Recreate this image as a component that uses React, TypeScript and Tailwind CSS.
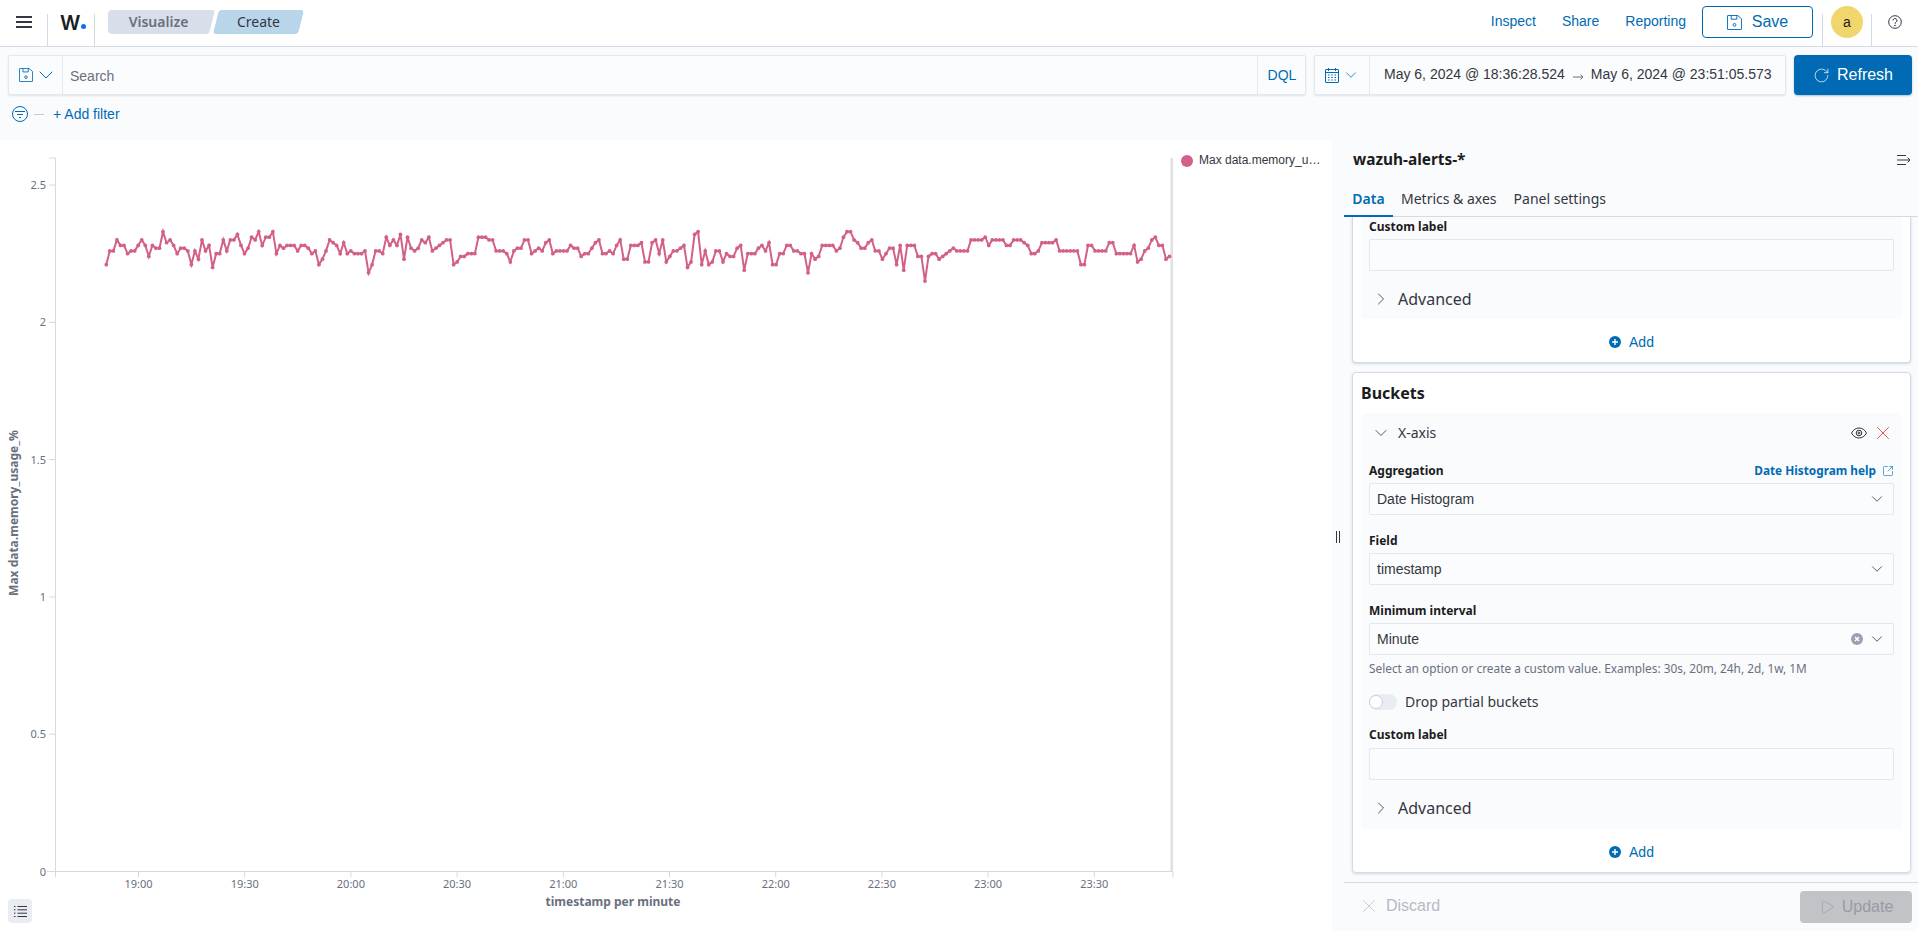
import { ChevronDown, ChevronRight, Play, RotateCw, SquareArrowOutUpRight, X } from "lucide-react";

const points = [
  21, 26, 26, 30, 28, 28, 25, 26, 26, 28, 30, 28, 24, 28, 27, 27, 33, 29, 30, 28, 25, 27, 27, 26, 21, 26, 23, 30, 26, 28,
  20, 25, 25, 30, 26, 30, 30, 32, 28, 25, 27, 31, 30, 33, 28, 31, 31, 33, 25, 28, 27, 28, 28, 28, 26, 28, 28, 27, 25, 26,
  21, 23, 26, 30, 29, 28, 25, 29, 25, 26, 25, 25, 25, 26, 18, 21, 26, 26, 25, 31, 28, 30, 28, 32, 23, 31, 27, 26, 27, 30,
  29, 31, 26, 27, 28, 29, 30, 30, 21, 22, 24, 24, 25, 25, 25, 31, 31, 31, 30, 30, 26, 26, 26, 25, 22, 26, 27, 27, 30, 30,
  25, 26, 27, 26, 29, 30, 25, 26, 26, 26, 26, 28, 27, 27, 24, 25, 25, 27, 29, 30, 25, 25, 26, 25, 28, 30, 23, 23, 28, 28,
  28, 29, 22, 22, 29, 30, 25, 30, 22, 24, 26, 26, 27, 28, 20, 22, 32, 33, 21, 26, 21, 22, 26, 26, 22, 25, 24, 24, 27, 28,
  19, 25, 25, 25, 27, 28, 26, 29, 21, 21, 25, 25, 28, 28, 26, 26, 25, 25, 18, 25, 23, 24, 28, 28, 28, 28, 26, 27, 31, 33,
  33, 30, 29, 27, 27, 29, 30, 26, 26, 23, 25, 27, 27, 21, 28, 19, 28, 28, 28, 24, 24, 15, 24, 25, 25, 23, 24, 25, 26, 27,
  26, 26, 26, 26, 30, 30, 30, 30, 31, 28, 30, 30, 30, 30, 28, 28, 30, 30, 30, 29, 28, 25, 25, 26, 29, 29, 29, 29, 30, 26,
  26, 26, 26, 26, 26, 21, 21, 28, 28, 26, 26, 26, 26, 29, 29, 25, 25, 25, 25, 25, 28, 22, 23, 26, 27, 30, 31, 28, 28, 23,
  24,
];

const yTicks = [
  { label: "2.5", y: 45 },
  { label: "2", y: 182.3 },
  { label: "1.5", y: 319.6 },
  { label: "1", y: 457 },
  { label: "0.5", y: 594.2 },
  { label: "0", y: 731.5 },
];

const xTicks = ["19:00", "19:30", "20:00", "20:30", "21:00", "21:30", "22:00", "22:30", "23:00", "23:30"];

function FloppyIcon({ className }: { className: string }) {
  return (
    <svg className={className} viewBox="0 0 16 16" fill="none" stroke="currentColor" strokeWidth="1">
      <path d="M1 .5h10.500l4 3.500v11a.5.5 0 0 1-.5.5H1a.5.5 0 0 1-.5-.5v-14a.5.5 0 0 1 .5-.5z" />
      <path d="M4.500 .5v4h6v-4" />
      <circle cx="8" cy="10.500" r="1.500" />
    </svg>
  );
}

function PlusCircle() {
  return (
    <svg className="h-3 w-3" viewBox="0 0 12 12">
      <circle cx="6" cy="6" r="6" fill="#006bb4" />
      <path d="M6 3v6M3 6h6" stroke="#fff" strokeWidth="1.400" />
    </svg>
  );
}

function AddRow() {
  return (
    <div className="flex items-center justify-center gap-[8px] text-sm text-[#006bb4] [font-family:'Liberation_Sans',Arial,sans-serif]">
      <PlusCircle />
      <span>Add</span>
    </div>
  );
}

function FieldLabel({ children }: { children: string }) {
  return <div className="flex h-[17px] items-center text-xs font-bold text-[#1a1c21] [font-family:'Noto_Sans',sans-serif]">{children}</div>;
}

function SelectBox({ value, clearable }: { value: string; clearable?: boolean }) {
  return (
    <div className="mt-[3px] flex h-8 items-center rounded-[2px] border border-[#e3e7ef] bg-[#fbfcfd] pl-[7px] pr-[7px] text-sm text-[#343741] [font-family:'Liberation_Sans',Arial,sans-serif]">
      <span className="flex-1">{value}</span>
      {clearable && (
        <svg className="mr-[5px] h-3 w-3" viewBox="0 0 12 12">
          <circle cx="6" cy="6" r="6" fill="#98a2b3" />
          <path d="M4 4l4 4M8 4l-4 4" stroke="#fff" strokeWidth="1.500" />
        </svg>
      )}
      <ChevronDown className="h-[18px] w-[18px] text-[#343741]" strokeWidth={1.1} />
    </div>
  );
}

function AdvancedRow() {
  return (
    <div className="flex items-center gap-[7px] pl-[10px] text-base text-[#343741] [font-family:'Noto_Sans',sans-serif]">
      <ChevronRight className="h-5 w-5" strokeWidth={1} />
      <span>Advanced</span>
    </div>
  );
}

function Chart() {
  const step = (1169.5 - 106.3) / (points.length - 1);
  const coords = points.map((p, i) => ({ x: 106.3 + i * step, y: 731.5 - (2 + p / 100) * 274.6 }));
  const tickClass = "fill-[#69707d] text-[11px] [font-family:'Noto_Sans',sans-serif]";
  const titleClass = "fill-[#69707d] text-xs font-bold [font-family:'Noto_Sans',sans-serif]";

  return (
    <svg className="block shrink-0" width="1175" height="791" viewBox="0 0 1175 791">
      <path d="M55.500 18V731.500M49 18h6.500M55.500 731.500V737M47 731.500H1173M1173 731.500V737" stroke="#d9d9d9" fill="none" />
      <rect x="1170.500" y="18" width="2.500" height="713" fill="#e0e0e0" />
      {yTicks.map((t) => (
        <g key={t.label}>
          <path d={`M49 ${t.y}H55.500`} stroke="#d9d9d9" />
          <text x="46" y={t.y + 4} textAnchor="end" className={tickClass}>
            {t.label}
          </text>
        </g>
      ))}
      {xTicks.map((label, i) => {
        const x = 138.500 + i * 106.2;
        return (
          <g key={label}>
            <path d={`M${x} 731.500V737`} stroke="#d9d9d9" />
            <text x={x} y="748" textAnchor="middle" className={tickClass}>
              {label}
            </text>
          </g>
        );
      })}
      <text x="613" y="766" textAnchor="middle" className={titleClass}>
        timestamp per minute
      </text>
      <text transform="translate(18 373) rotate(-90)" textAnchor="middle" className={titleClass}>
        Max data.memory_usage_%
      </text>
      <polyline
        points={coords.map((c) => `${c.x.toFixed(1)},${c.y.toFixed(1)}`).join(" ")}
        fill="none"
        stroke="#d36086"
        strokeWidth="2"
      />
      {coords.map((c, i) => (
        <circle key={i} cx={c.x} cy={c.y} r="1.900" fill="#d36086" />
      ))}
    </svg>
  );
}

export default function App() {
  return (
    <div className="flex h-screen w-full flex-col overflow-hidden bg-[#fafbfd] text-[#343741] [font-family:'Liberation_Sans',Arial,sans-serif]">
      <header className="flex h-[47px] shrink-0 items-stretch border-b border-[#d3dae6] bg-white">
        <button className="flex w-[47px] shrink-0 items-start justify-center pt-[16px]">
          <svg className="h-[12px] w-[16px]" viewBox="0 0 16 12" fill="#343741">
            <rect width="16" height="2" y="0" />
            <rect width="16" height="2" y="5" />
            <rect width="16" height="2" y="10" />
          </svg>
        </button>
        <div className="mt-[14px] flex w-[48px] shrink-0 items-start border-x border-[#d3dae6] pl-[12px]">
          <div className="mt-[-2px] flex items-end">
            <span className="text-[20px] leading-[22px] font-semibold text-[#1a1c21] [font-family:Inter,sans-serif]">W</span>
            <span className="mb-[5px] ml-[1px] h-[5px] w-[5px] rounded-full bg-[#0a6eff]" />
          </div>
        </div>
        <div className="ml-[13px] mt-[10px] flex h-6 items-start text-sm [font-family:'Noto_Sans',sans-serif]">
          <div className="relative flex h-6 w-[103px] items-center justify-center pr-[2px] font-semibold text-[#69707d]">
            <span className="absolute inset-y-0 left-0 w-[30px] rounded-l-[4px] bg-[#d9dfea]" />
            <span className="absolute inset-y-0 right-[-1px] left-[6px] -skew-x-[14deg] rounded-[3px] bg-[#d9dfea]" />
            <span className="relative">Visualize</span>
          </div>
          <div className="relative ml-[5px] flex h-6 w-[85px] items-center justify-center text-[#343741]">
            <span className="absolute inset-0 -skew-x-[14deg] rounded-[3px] bg-[#b8d5ea]" />
            <span className="relative">Create</span>
          </div>
        </div>
        <div className="ml-auto flex items-start">
          <nav className="flex h-[42px] items-center gap-[26px] text-sm text-[#006bb4]">
            <span>Inspect</span>
            <span>Share</span>
            <span>Reporting</span>
          </nav>
          <button className="ml-[16px] mt-[6px] flex h-8 w-[111px] items-center justify-center gap-[10px] rounded-[4px] border border-[#006bb4] text-base text-[#006bb4]">
            <FloppyIcon className="h-[15px] w-[15px]" />
            <span>Save</span>
          </button>
          <div className="ml-[9px] mt-[14px] flex h-[32px] w-[50px] items-start justify-center border-x border-[#d3dae6]">
            <span className="mt-[-8px] flex h-8 w-8 items-center justify-center rounded-full bg-[#f0d76d] text-sm text-[#1a1c21]">a</span>
          </div>
          <div className="flex h-[44px] w-[46px] items-center justify-center">
            <svg className="h-[14px] w-[14px]" viewBox="0 0 14 14" fill="none" stroke="#343741">
              <circle cx="7" cy="7" r="6.300" />
              <path d="M5 5.500a2 2 0 1 1 3 1.700c-.7.400-1 .8-1 1.600" />
              <circle cx="7" cy="10.500" r=".4" />
            </svg>
          </div>
        </div>
      </header>

      <div className="flex h-[48px] shrink-0 items-end gap-[8px] pl-[8px] pr-[6px]">
        <div className="flex h-10 flex-1 items-stretch rounded-[2px] border border-[#e4e8ef] bg-[#fbfcfd] shadow-[0_1px_2px_rgba(152,162,179,0.25)]">
          <div className="flex w-[54px] items-center gap-[1px] border-r border-[#e4e8ef] pl-[10px] text-[#006bb4]">
            <FloppyIcon className="h-[14px] w-[14px]" />
            <ChevronDown className="h-6 w-6 shrink-0" strokeWidth={1} />
          </div>
          <input placeholder="Search" className="min-w-0 flex-1 bg-transparent pl-[7px] pt-[1px] text-sm outline-none placeholder:text-[#69707d]" />
          <div className="flex w-[48px] items-center justify-center border-l border-[#e4e8ef] pl-[1px] text-sm text-[#006bb4]">DQL</div>
        </div>
        <div className="flex h-10 w-[472px] items-stretch rounded-[2px] border border-[#e4e8ef] bg-[#fbfcfd] shadow-[0_1px_2px_rgba(152,162,179,0.25)]">
          <div className="flex w-[55px] items-center gap-[3px] border-r border-[#e4e8ef] pl-[10px] text-[#006bb4]">
            <svg className="h-[15px] w-[14px]" viewBox="0 0 14 15" fill="none" stroke="currentColor">
              <rect x=".5" y="1.500" width="13" height="13" rx=".5" />
              <path d="M.5 4.500h13M3.500 0v3M10.500 0v3" />
              <path d="M3 7h1.500M6.200 7h1.500M9.500 7h1.500M3 9.500h1.500M6.200 9.500h1.500M9.500 9.500h1.500M3 12h1.500M6.200 12h1.500M9.500 12h1.500" />
            </svg>
            <ChevronDown className="h-[18px] w-[18px] shrink-0" strokeWidth={1} />
          </div>
          <div className="flex flex-1 items-center pb-[2px] pl-[14px] text-sm text-[#343741]">
            <span>May 6, 2024 @ 18:36:28.524</span>
            <svg className="ml-[8px] mr-[7px] mt-[5px] h-[8px] w-[11px]" viewBox="0 0 11 8" fill="none" stroke="#69707d">
              <path d="M0 4h10M7.500 1.500L10 4 7.500 6.500" />
            </svg>
            <span>May 6, 2024 @ 23:51:05.573</span>
          </div>
        </div>
        <button className="flex h-10 w-[118px] items-center justify-center gap-[7px] rounded-[4px] bg-[#006bb4] text-base text-white shadow-[0_1px_2px_rgba(0,60,110,0.3)]">
          <RotateCw className="h-[17px] w-[17px]" strokeWidth={1} />
          <span>Refresh</span>
        </button>
      </div>

      <div className="flex h-[45px] shrink-0 items-center pb-[7px] pl-[12px] text-sm text-[#006bb4]">
        <svg className="h-4 w-4" viewBox="0 0 16 16" fill="none" stroke="currentColor">
          <circle cx="8" cy="8" r="7.500" />
          <path d="M3 5.500h10M5 8.500h6M7 11.500h2" />
        </svg>
        <span className="ml-[6px] h-px w-[10px] bg-[#c5ccd8]" />
        <span className="ml-[9px]">+ Add filter</span>
      </div>

      <main className="flex min-h-0 flex-1">
        <section className="relative flex w-[1332px] shrink-0 bg-white">
          <Chart />
          <div className="flex h-fit items-center gap-[6px] pl-[6px] pt-[14px] text-xs text-[#343741]">
            <span className="h-3 w-3 rounded-full bg-[#d36086]" />
            <span className="mt-[-2px]">Max data.memory_u…</span>
          </div>
          <button className="absolute bottom-[8px] left-[8px] flex h-6 w-6 items-center justify-center rounded-[4px] bg-[#e9edf3]">
            <svg className="h-[13px] w-[13px]" viewBox="0 0 13 13" fill="none" stroke="#343741">
              <path d="M3.500 1.500H13M3.500 4.800H13M3.500 8.200H13M3.500 11.500H13M0 1.500h1.500M0 4.800h1.500M0 8.200h1.500M0 11.500h1.500" />
            </svg>
          </button>
        </section>

        <aside className="relative flex min-w-0 flex-1 flex-col pl-[12px] [font-family:'Noto_Sans',sans-serif]">
          <span className="absolute left-[4px] top-[391px] h-[12px] w-[4px] border-x border-[#343741]" />
          <div className="flex h-[42px] shrink-0 items-center pb-[2px] pl-[9px] pr-[7px]">
            <h2 className="flex-1 text-[15.400px] font-bold text-[#1a1c21]">wazuh-alerts-*</h2>
            <svg className="h-[12px] w-[14px]" viewBox="0 0 14 12" fill="none" stroke="#343741">
              <path d="M0 1.500h9M0 6h13M0 10.500h9M10.500 3.500L13 6l-2.500 2.500" />
            </svg>
          </div>
          <div className="flex h-[35px] shrink-0 items-stretch border-b border-[#d3dae6] text-sm">
            <span className="-mb-px flex w-[49px] items-center justify-center border-b-2 border-[#006bb4] font-semibold text-[#006bb4]">Data</span>
            <span className="ml-[8px] flex items-center text-[#343741]">Metrics &amp; axes</span>
            <span className="ml-[17px] flex items-center text-[#343741]">Panel settings</span>
          </div>

          <div className="min-h-0 flex-1 overflow-hidden pl-[8px] pr-[7px]">
            <div className="h-[146px] rounded-b-[4px] border-x border-b border-[#d3dae6] bg-white shadow-[0_1px_3px_rgba(152,162,179,0.4)]">
              <div className="mx-[8px] h-[102px] rounded-b-[4px] bg-[#fafbfd] px-[8px] pt-[1px]">
                <FieldLabel>Custom label</FieldLabel>
                <input className="mt-[4px] block h-8 w-full rounded-[2px] border border-[#e3e7ef] bg-[#fbfcfd]" />
                <div className="mx-[-8px] mt-[16px]">
                  <AdvancedRow />
                </div>
              </div>
              <div className="mt-[13px]">
                <AddRow />
              </div>
            </div>

            <div className="mt-[9px] h-[501px] rounded-[4px] border border-[#d3dae6] bg-white shadow-[0_1px_3px_rgba(152,162,179,0.4)]">
              <h3 className="flex h-[40px] items-center pl-[8px] text-base font-bold text-[#1a1c21]">Buckets</h3>
              <div className="mx-[8px] h-[416px] rounded-[4px] bg-[#fafbfd] px-[8px]">
                <div className="mx-[-8px] flex h-[40px] items-center pl-[10px] pr-[8px] text-sm">
                  <ChevronDown className="h-5 w-5" strokeWidth={1} />
                  <span className="ml-[7px] flex-1">X-axis</span>
                  <svg className="h-[14px] w-[16px]" viewBox="0 0 16 14" fill="none" stroke="#343741">
                    <path d="M.5 7C2.500 3.500 5 2 8 2s5.500 1.500 7.500 5c-2 3.500-4.500 5-7.500 5S2.500 10.500 .5 7z" />
                    <circle cx="8" cy="7" r="2.800" />
                    <circle cx="8" cy="7" r="1" />
                  </svg>
                  <X className="ml-[5px] h-[22px] w-[22px] text-[#d9362b]" strokeWidth={0.9} />
                </div>
                <div className="mt-[9px] flex items-center justify-between">
                  <FieldLabel>Aggregation</FieldLabel>
                  <span className="flex items-center gap-[6px] text-[11.800px] font-bold text-[#006bb4]">
                    Date Histogram help
                    <SquareArrowOutUpRight className="h-[12px] w-[12px]" strokeWidth={1.2} />
                  </span>
                </div>
                <SelectBox value="Date Histogram" />
                <div className="mt-[18px]">
                  <FieldLabel>Field</FieldLabel>
                </div>
                <SelectBox value="timestamp" />
                <div className="mt-[18px]">
                  <FieldLabel>Minimum interval</FieldLabel>
                </div>
                <SelectBox value="Minute" clearable />
                <p className="mt-[4px] text-[11.850px] leading-[18px] text-[#69707d]">Select an option or create a custom value. Examples: 30s, 20m, 24h, 2d, 1w, 1M</p>
                <div className="mt-[17px] flex h-4 items-center gap-[8px]">
                  <span className="flex h-4 w-[28px] items-center rounded-full bg-[#e9edf3]">
                    <span className="h-[14px] w-[14px] rounded-full border border-[#c9cfda] bg-white" />
                  </span>
                  <span className="text-sm">Drop partial buckets</span>
                </div>
                <div className="mt-[17px]">
                  <FieldLabel>Custom label</FieldLabel>
                </div>
                <input className="mt-[4px] block h-8 w-full rounded-[2px] border border-[#e3e7ef] bg-[#fbfcfd]" />
                <div className="mx-[-8px] mt-[16px]">
                  <AdvancedRow />
                </div>
              </div>
              <div className="mt-[13px]">
                <AddRow />
              </div>
            </div>
          </div>

          <footer className="flex h-[49px] shrink-0 items-start border-t border-[#d3dae6] pl-[14px] pr-[6px] pt-[8px] [font-family:'Liberation_Sans',Arial,sans-serif]">
            <div className="mt-[3px] flex flex-1 items-center gap-[6px] text-base text-[#b5bac4]">
              <X className="h-[22px] w-[22px]" strokeWidth={0.8} />
              <span>Discard</span>
            </div>
            <button className="flex h-8 w-[112px] items-center justify-center gap-[7px] rounded-[4px] bg-[#c2c3c6] text-base text-[#969ba5]">
              <Play className="h-4 w-4" strokeWidth={1} />
              <span>Update</span>
            </button>
          </footer>
        </aside>
      </main>
    </div>
  );
}
